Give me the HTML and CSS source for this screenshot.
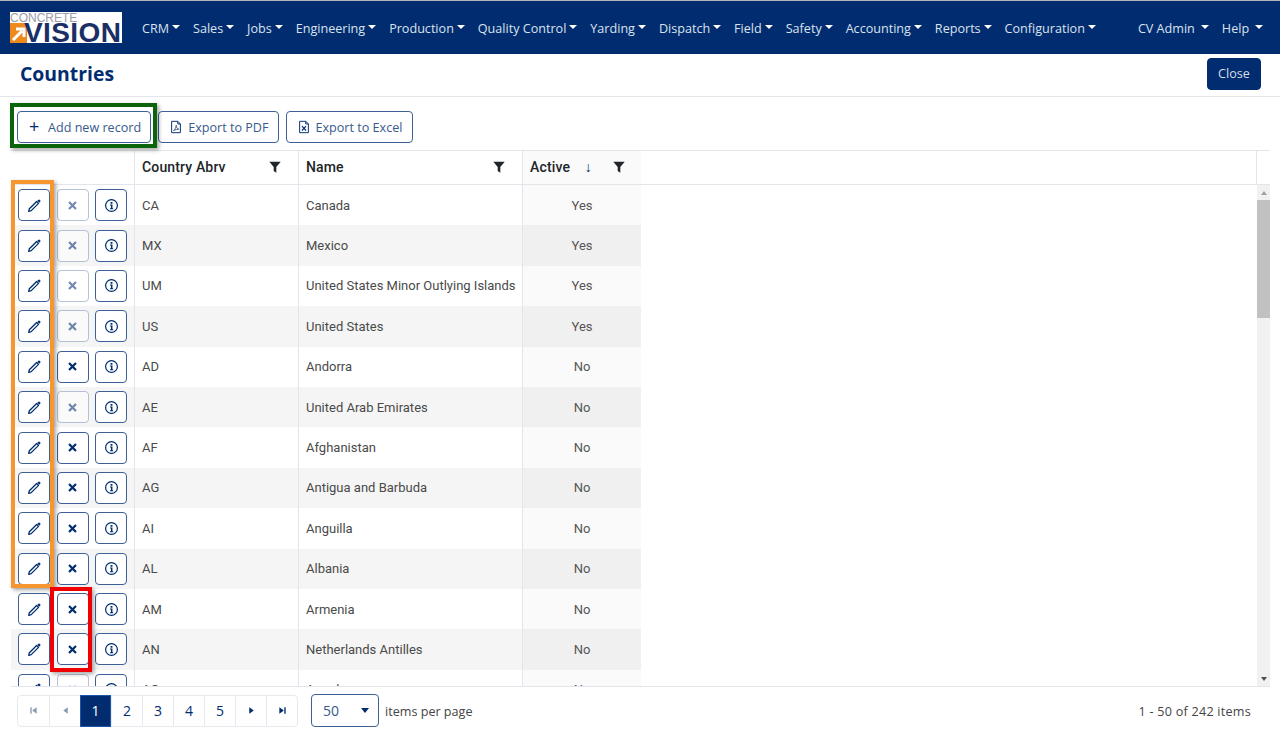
FILE: index.html
```html
<!DOCTYPE html>
<html lang="en">
<head>
<meta charset="utf-8">
<title>Countries</title>
<link rel="stylesheet" href="styles.css">
</head>
<body>
<svg class="sprites" width="0" height="0" aria-hidden="true">
  <symbol id="i-pencil" viewBox="0 0 16 16"><path d="M10.300 3.700l2 2-7.800 7.800-2.700.7.700-2.700z" fill="none" stroke="currentColor" stroke-width="1.400" stroke-linejoin="round"/><path d="M11 3l1.200-1.200a.8.8 0 0 1 1.100 0l.9.9a.8.8 0 0 1 0 1.100L13 5z" fill="currentColor"/></symbol>
  <symbol id="i-x" viewBox="0 0 16 16"><path d="M4.300 4.300l7.400 7.400M11.700 4.300l-7.400 7.400" stroke="currentColor" stroke-width="2.400" fill="none"/></symbol>
  <symbol id="i-info" viewBox="0 0 16 16"><circle cx="8" cy="8" r="6.300" fill="none" stroke="currentColor" stroke-width="1.300"/><path d="M7 4.200h2v1.800H7zM6.400 7h2.600v3.900h.8V12H6.400v-1.100h1V8.100h-1z" fill="currentColor"/></symbol>
  <symbol id="i-filter" viewBox="0 0 16 16"><path d="M1.500 2h13L9.500 8v6.500L6.500 12.500V8z" fill="currentColor"/></symbol>
  <symbol id="i-pdf" viewBox="0 0 16 16"><path d="M3 1.500h7l3 3v10H3z M10 1.500v3h3" fill="none" stroke="currentColor" stroke-width="1.100"/><path d="M5.200 12c1.500-.8 3-3.500 3-6 .2 2.500 1.400 4.200 3 4.500-1.800 0-4 .5-6 1.500z" fill="none" stroke="currentColor" stroke-width=".8"/></symbol>
  <symbol id="i-xls" viewBox="0 0 16 16"><path d="M3 1.500h7l3 3v10H3z M10 1.500v3h3" fill="none" stroke="currentColor" stroke-width="1.100"/><path d="M5.700 7l4.600 5M10.300 7l-4.600 5" stroke="currentColor" stroke-width="1.300"/></symbol>
</svg>

<header class="navbar">
  <div class="logo">
    <span class="logo-top">CONCRETE</span>
    <span class="logo-arrow"><svg viewBox="0 0 20 20" width="20" height="20"><path d="M3 17L12 8M6 6h8v8" stroke="#fff" stroke-width="3" fill="none"/></svg></span>
    <span class="logo-main">VISION</span>
  </div>
  <nav class="nav-main">
    <a class="nav-item">CRM</a><a class="nav-item">Sales</a><a class="nav-item">Jobs</a><a class="nav-item">Engineering</a><a class="nav-item">Production</a><a class="nav-item">Quality Control</a><a class="nav-item">Yarding</a><a class="nav-item">Dispatch</a><a class="nav-item">Field</a><a class="nav-item">Safety</a><a class="nav-item">Accounting</a><a class="nav-item">Reports</a><a class="nav-item">Configuration</a>
  </nav>
  <nav class="nav-user">
    <a class="nav-item wide">CV Admin</a><a class="nav-item wide">Help</a>
  </nav>
</header>

<section class="page-head">
  <h1>Countries</h1>
  <button class="btn-close">Close</button>
</section>

<div class="toolbar">
  <button class="btn"><span class="plus">+</span>Add new record</button>
  <button class="btn"><svg class="ico"><use href="#i-pdf"/></svg>Export to PDF</button>
  <button class="btn"><svg class="ico"><use href="#i-xls"/></svg>Export to Excel</button>
</div>

<main class="grid">
  <div class="grid-head">
    <div class="hcell c0"></div>
    <div class="hcell c1"><span class="hlabel">Country Abrv</span><svg class="filter"><use href="#i-filter"/></svg></div>
    <div class="hcell c2"><span class="hlabel">Name</span><svg class="filter"><use href="#i-filter"/></svg></div>
    <div class="hcell c3"><span class="hlabel">Active</span><span class="sort">↓</span><svg class="filter"><use href="#i-filter"/></svg></div>
    <div class="hrest"></div>
  </div>
  <div class="grid-body">
    <div class="rows" id="rows">
      <div class="row"><div class="cell c0 actions"><button class="ib"><svg><use href="#i-pencil"/></svg></button><button class="ib off"><svg><use href="#i-x"/></svg></button><button class="ib"><svg><use href="#i-info"/></svg></button></div><div class="cell c1">CA</div><div class="cell c2">Canada</div><div class="cell c3">Yes</div></div>
      <div class="row alt"><div class="cell c0 actions"><button class="ib"><svg><use href="#i-pencil"/></svg></button><button class="ib off"><svg><use href="#i-x"/></svg></button><button class="ib"><svg><use href="#i-info"/></svg></button></div><div class="cell c1">MX</div><div class="cell c2">Mexico</div><div class="cell c3">Yes</div></div>
      <div class="row"><div class="cell c0 actions"><button class="ib"><svg><use href="#i-pencil"/></svg></button><button class="ib off"><svg><use href="#i-x"/></svg></button><button class="ib"><svg><use href="#i-info"/></svg></button></div><div class="cell c1">UM</div><div class="cell c2">United States Minor Outlying Islands</div><div class="cell c3">Yes</div></div>
      <div class="row alt"><div class="cell c0 actions"><button class="ib"><svg><use href="#i-pencil"/></svg></button><button class="ib off"><svg><use href="#i-x"/></svg></button><button class="ib"><svg><use href="#i-info"/></svg></button></div><div class="cell c1">US</div><div class="cell c2">United States</div><div class="cell c3">Yes</div></div>
      <div class="row"><div class="cell c0 actions"><button class="ib"><svg><use href="#i-pencil"/></svg></button><button class="ib"><svg><use href="#i-x"/></svg></button><button class="ib"><svg><use href="#i-info"/></svg></button></div><div class="cell c1">AD</div><div class="cell c2">Andorra</div><div class="cell c3">No</div></div>
      <div class="row alt"><div class="cell c0 actions"><button class="ib"><svg><use href="#i-pencil"/></svg></button><button class="ib off"><svg><use href="#i-x"/></svg></button><button class="ib"><svg><use href="#i-info"/></svg></button></div><div class="cell c1">AE</div><div class="cell c2">United Arab Emirates</div><div class="cell c3">No</div></div>
      <div class="row"><div class="cell c0 actions"><button class="ib"><svg><use href="#i-pencil"/></svg></button><button class="ib"><svg><use href="#i-x"/></svg></button><button class="ib"><svg><use href="#i-info"/></svg></button></div><div class="cell c1">AF</div><div class="cell c2">Afghanistan</div><div class="cell c3">No</div></div>
      <div class="row alt"><div class="cell c0 actions"><button class="ib"><svg><use href="#i-pencil"/></svg></button><button class="ib"><svg><use href="#i-x"/></svg></button><button class="ib"><svg><use href="#i-info"/></svg></button></div><div class="cell c1">AG</div><div class="cell c2">Antigua and Barbuda</div><div class="cell c3">No</div></div>
      <div class="row"><div class="cell c0 actions"><button class="ib"><svg><use href="#i-pencil"/></svg></button><button class="ib"><svg><use href="#i-x"/></svg></button><button class="ib"><svg><use href="#i-info"/></svg></button></div><div class="cell c1">AI</div><div class="cell c2">Anguilla</div><div class="cell c3">No</div></div>
      <div class="row alt"><div class="cell c0 actions"><button class="ib"><svg><use href="#i-pencil"/></svg></button><button class="ib"><svg><use href="#i-x"/></svg></button><button class="ib"><svg><use href="#i-info"/></svg></button></div><div class="cell c1">AL</div><div class="cell c2">Albania</div><div class="cell c3">No</div></div>
      <div class="row"><div class="cell c0 actions"><button class="ib"><svg><use href="#i-pencil"/></svg></button><button class="ib"><svg><use href="#i-x"/></svg></button><button class="ib"><svg><use href="#i-info"/></svg></button></div><div class="cell c1">AM</div><div class="cell c2">Armenia</div><div class="cell c3">No</div></div>
      <div class="row alt"><div class="cell c0 actions"><button class="ib"><svg><use href="#i-pencil"/></svg></button><button class="ib"><svg><use href="#i-x"/></svg></button><button class="ib"><svg><use href="#i-info"/></svg></button></div><div class="cell c1">AN</div><div class="cell c2">Netherlands Antilles</div><div class="cell c3">No</div></div>
      <div class="row"><div class="cell c0 actions"><button class="ib"><svg><use href="#i-pencil"/></svg></button><button class="ib off"><svg><use href="#i-x"/></svg></button><button class="ib"><svg><use href="#i-info"/></svg></button></div><div class="cell c1">AO</div><div class="cell c2">Angola</div><div class="cell c3">No</div></div>
    </div>
    <div class="scrollbar"><span class="arr up"></span><span class="thumb"></span><span class="track"></span><span class="arr down"></span></div>
  </div>
  <div class="pager">
    <div class="pages">
      <a class="pg dim"><svg viewBox="0 0 10 10"><path d="M1.500 1.500h1.500v7H1.500zM8.500 1.500v7L3.500 5z" fill="currentColor"/></svg></a>
      <a class="pg dim"><svg viewBox="0 0 10 10"><path d="M7.500 1.500v7L2.500 5z" fill="currentColor"/></svg></a>
      <a class="pg on">1</a><a class="pg">2</a><a class="pg">3</a><a class="pg">4</a><a class="pg">5</a>
      <a class="pg"><svg viewBox="0 0 10 10"><path d="M2.500 1.500v7L7.500 5z" fill="currentColor"/></svg></a>
      <a class="pg"><svg viewBox="0 0 10 10"><path d="M7 1.500h1.500v7H7zM1.500 1.500v7L6.500 5z" fill="currentColor"/></svg></a>
    </div>
    <div class="size"><span>50</span><i class="caret"></i></div>
    <span class="per">items per page</span>
    <span class="info">1 - 50 of 242 items</span>
  </div>
</main>

<div class="mark green"></div>
<div class="mark orange"></div>
<div class="mark red"></div>
</body>
</html>
```
FILE: styles.css
```css
* { box-sizing: border-box; }
html, body { margin: 0; height: 100%; }
body {
  position: relative;
  width: 1280px;
  height: 731px;
  overflow: hidden;
  background: #fff;
  font-family: "Open Sans", "Liberation Sans", sans-serif;
  color: #212529;
  display: flex;
  flex-direction: column;
}
.sprites { position: absolute; }
button { font-family: inherit; cursor: pointer; }

.navbar {
  height: 54px;
  flex: none;
  background: #012d70;
  border-top: 1px solid #b4b4b4;
  display: flex;
  align-items: center;
  padding-left: 10px;
  color: #dbe2ee;
  font-size: 12.600px;
}
.logo {
  position: relative;
  width: 112px;
  height: 31px;
  background: #fff;
  overflow: hidden;
  flex: none;
  margin-top: -1px;
}
.logo-top {
  position: absolute;
  left: 0; top: 0;
  font: 12px/12px "Liberation Sans", sans-serif;
  color: #9a9ea6;
}
.logo-arrow {
  position: absolute;
  left: 0; top: 11px;
  width: 17px; height: 20px;
  background: #ee8a1d;
  overflow: hidden;
}
.logo-main {
  position: absolute;
  left: 14px; top: 9px;
  font: 700 28px/23px "Liberation Sans", sans-serif;
  color: #1b2f66;
  letter-spacing: .4px;
}
.nav-main { display: flex; margin-left: 20px; gap: 12.950px; flex: none; padding-top: 2px; }
.nav-user { display: flex; margin-left: 42px; gap: 13px; flex: none; padding-top: 2px; }
.nav-item { white-space: nowrap; display: inline-flex; align-items: center; }
.nav-item::after {
  content: "";
  margin-left: 3px;
  border-top: 4px solid #fff;
  border-left: 4px solid transparent;
  border-right: 4px solid transparent;
  margin-top: -3px;
}
.nav-item.wide::after { margin-left: 6px; }

.page-head {
  height: 43px;
  flex: none;
  border-bottom: 1px solid #e3e5ea;
  display: flex;
  align-items: center;
  justify-content: space-between;
  padding: 0 19px 3px 20px;
}
.page-head h1 {
  margin: 0;
  font: 700 19.400px/1 "Open Sans", sans-serif;
  color: #012d70;
}
.btn-close {
  width: 54px;
  height: 32px;
  background: #012d70;
  border: 1px solid #012d70;
  border-radius: 4px;
  color: #d7deea;
  font-size: 12.600px;
  padding: 0;
}

.toolbar {
  height: 53px;
  flex: none;
  display: flex;
  align-items: flex-start;
  gap: 7px;
  padding: 14px 0 0 17px;
}
.btn {
  height: 32px;
  display: inline-flex;
  align-items: center;
  background: #fff;
  color: #375a8c;
  border: 1px solid #3d6197;
  border-radius: 4px;
  font-size: 12.600px;
  padding: 0 9px 0 10px;
  white-space: nowrap;
}
.plus { width: 20px; padding-left: 1px; color: #012d70; font-size: 18px; line-height: 1; margin-top: -2px; text-align: left; }
.ico { width: 14px; height: 14px; margin-right: 5px; color: #012d70; }

.grid {
  flex: 1;
  min-height: 0;
  margin: 0 10px 0 11px;
  display: flex;
  flex-direction: column;
  font-family: Roboto, "Open Sans", sans-serif;
  font-size: 14px;
}
.grid-head {
  height: 35px;
  flex: none;
  display: flex;
  border-top: 1px solid #e3e5ea;
  border-bottom: 1px solid #e3e5ea;
  color: #212529;
}
.c0 { width: 123px; flex: none; }
.c1 { width: 164px; flex: none; }
.c2 { width: 224px; flex: none; }
.c3 { width: 119px; flex: none; }
.hcell {
  display: flex;
  align-items: center;
  padding: 0 16px 2px 7px;
  border-left: 1px solid #e3e5ea;
  font-weight: 500;
  letter-spacing: .15px;
  background: #fff;
}
.hcell.c0 { border-left: 0; }
.hcell.c3 { background: #fafafa; padding-right: 15px; }
.hlabel { flex: 1; }
.sort { color: #012d70; font-size: 14px; margin-right: 20px; font-weight: 700; }
.filter { width: 14px; height: 14px; color: #212529; flex: none; }
.hrest { flex: 1; border-right: 1px solid #e3e5ea; margin-right: 13px; }

.grid-body { flex: 1; min-height: 0; display: flex; overflow: hidden; }
.rows { flex: 1; overflow: hidden; }
.row { display: flex; height: 40.400px; width: 630px; background: #fff; }
.row.alt { background: #f5f5f5; }
.cell {
  display: flex;
  align-items: center;
  padding: 0 7px;
  border-left: 1px solid #e3e5ea;
  color: #4a4a4a;
  font-family: Roboto, "Liberation Sans", sans-serif;
  font-size: 13px;
  white-space: nowrap;
}
.cell.c0 { border-left: 0; }
.cell.c3 { justify-content: center; background: rgba(0,0,0,.02); color: #555; }
.actions { gap: 6.500px; padding: 0 0 0 7px; }
.ib {
  width: 32px;
  height: 32px;
  padding: 0;
  background: #fff;
  border: 1px solid #3d6197;
  border-radius: 4px;
  display: flex;
  align-items: center;
  justify-content: center;
  color: #012d70;
}
.ib svg { display: block; width: 15px; height: 15px; }
.ib.off { opacity: .55; border-color: #7e95b8; }

.scrollbar {
  width: 13px;
  flex: none;
  background: #f1f1f1;
  display: flex;
  flex-direction: column;
}
.arr { height: 15px; flex: none; display: flex; align-items: center; justify-content: center; }
.arr::before { content: ""; border-left: 3.500px solid transparent; border-right: 3.500px solid transparent; }
.arr.up::before { border-bottom: 4px solid #a0a0a0; }
.arr.down::before { border-top: 4px solid #505050; }
.thumb { height: 118px; background: #c1c1c1; flex: none; }
.track { flex: 1; }

.pager {
  height: 45px;
  flex: none;
  display: flex;
  align-items: center;
  border-top: 1px solid #e3e5ea;
  padding: 3px 0 0 6px;
  font-family: "Open Sans", sans-serif;
  font-size: 12.600px;
  color: #444;
}
.pages { display: flex; border: 1px solid #e7e9ee; border-radius: 4px; height: 32px; }
.pg {
  width: 31px;
  display: flex;
  align-items: center;
  justify-content: center;
  border-left: 1px solid #e7e9ee;
  color: #012d70;
  font-size: 14px;
  margin: -1px 0;
  height: 32px;
}
.pg:first-child { border-left: 0; }
.pg svg { width: 9px; height: 9px; }
.pg.dim { color: #8a9ab5; }
.pg.on { background: #012d70; color: #fff; border: 1px solid #1f55a8; }
.size {
  width: 68px;
  height: 33px;
  margin-left: 13px;
  border: 1px solid #3d6197;
  border-radius: 4px;
  display: flex;
  align-items: center;
  justify-content: space-between;
  padding: 0 9px 0 11px;
  color: #375a8c;
  font-size: 14px;
}
.caret { border-top: 5px solid #012d70; border-left: 4px solid transparent; border-right: 4px solid transparent; }
.per { margin: 2px 0 0 6px; }
.info { margin: 2px 19px 0 auto; letter-spacing: .25px; }

.mark { position: absolute; pointer-events: none; box-shadow: 2px 2px 4px rgba(0,0,0,.35); }
.green { left: 10px; top: 103px; width: 147px; height: 45px; border: 4px solid #0b640b; }
.orange { left: 11px; top: 180px; width: 43px; height: 408px; border: 4px solid #f7962e; }
.red { left: 50px; top: 587px; width: 42px; height: 85px; border: 4px solid #f00000; }
```
